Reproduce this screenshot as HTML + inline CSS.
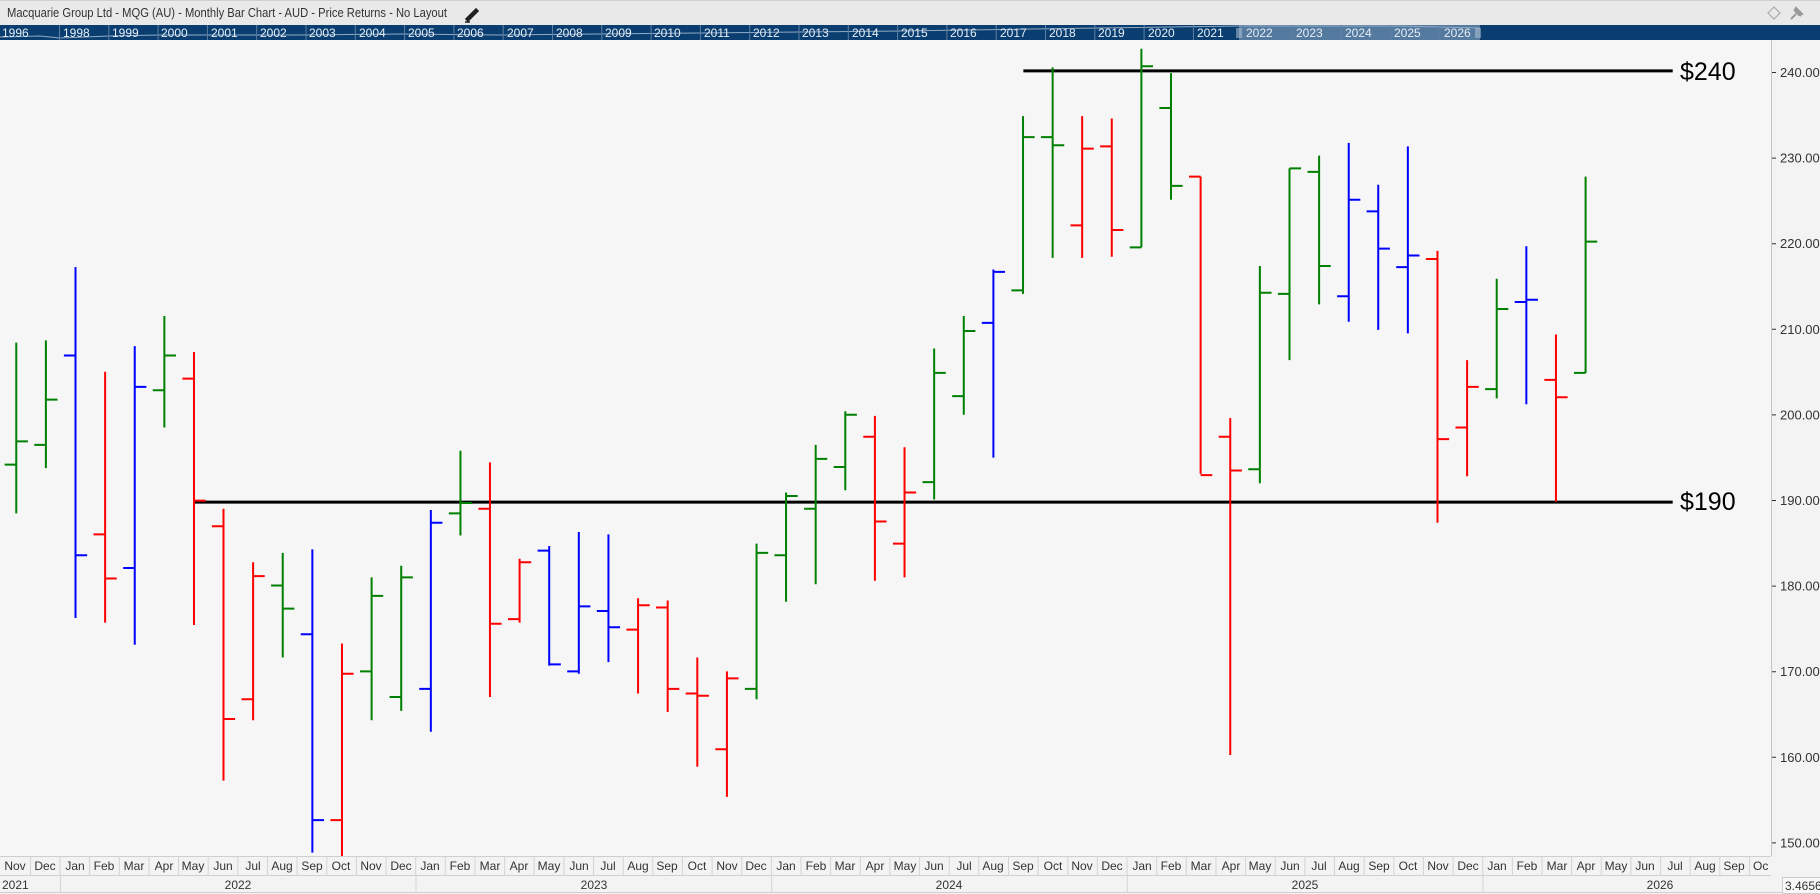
<!DOCTYPE html>
<html><head><meta charset="utf-8"><style>
html,body{margin:0;padding:0;width:1820px;height:894px;overflow:hidden;background:#f6f6f6;font-family:"Liberation Sans",sans-serif}
svg{display:block}
</style></head><body>
<svg width="1820" height="894" xmlns="http://www.w3.org/2000/svg" font-family="Liberation Sans, sans-serif">
<rect x="0" y="0" width="1820" height="894" fill="#f6f6f6"/>
<rect x="0" y="0" width="1820" height="25" fill="#e9e9e9"/>
<line x1="0" y1="0.5" x2="1820" y2="0.5" stroke="#cfcfcf"/>
<text x="7" y="17" font-size="13" fill="#333" textLength="440" lengthAdjust="spacingAndGlyphs">Macquarie Group Ltd - MQG (AU) - Monthly Bar Chart - AUD - Price Returns - No Layout</text>
<path d="M466 19 L476 9 L478 11 L468 21 Z M465 22 L470 22" stroke="#222" stroke-width="1.6" fill="#222"/>
<path d="M1774 7 L1780 13 L1774 19 L1768 13 Z" fill="none" stroke="#aaa" stroke-width="1.2"/>
<path d="M1791 19 L1796 14 M1794 9 L1801 16 M1796 8 L1802 14 L1799 15 L1795 11 Z" stroke="#999" stroke-width="2" fill="#999"/>
<rect x="0" y="25" width="1820" height="15" fill="#0b3e70"/>
<rect x="1239" y="25" width="241" height="15" fill="#557a9f"/>
<path d="M0 37 L40 36 L60 38 L110 36 L160 35 L300 35 L400 34 L500 35 L700 33 L900 31 L1100 28 L1239 26 L1400 26 L1480 28" stroke="#8fa9c4" stroke-width="1" fill="none"/>
<g fill="#e6eef6" font-size="12">
<text x="2" y="37">1996</text>
<text x="63" y="37">1998</text><text x="112" y="37">1999</text><text x="161" y="37">2000</text><text x="211" y="37">2001</text><text x="260" y="37">2002</text><text x="309" y="37">2003</text><text x="359" y="37">2004</text><text x="408" y="37">2005</text><text x="457" y="37">2006</text><text x="507" y="37">2007</text><text x="556" y="37">2008</text><text x="605" y="37">2009</text><text x="654" y="37">2010</text><text x="704" y="37">2011</text><text x="753" y="37">2012</text><text x="802" y="37">2013</text><text x="852" y="37">2014</text><text x="901" y="37">2015</text><text x="950" y="37">2016</text><text x="1000" y="37">2017</text><text x="1049" y="37">2018</text><text x="1098" y="37">2019</text><text x="1148" y="37">2020</text><text x="1197" y="37">2021</text><text x="1246" y="37">2022</text><text x="1296" y="37">2023</text><text x="1345" y="37">2024</text><text x="1394" y="37">2025</text><text x="1444" y="37">2026</text>
</g>
<g stroke="#5d7fa3" stroke-width="1">
<path d="M59.5 25V40M108.8 25V40M158.1 25V40M207.4 25V40M256.7 25V40M306 25V40M355.3 25V40M404.6 25V40M453.9 25V40M503.2 25V40M552.5 25V40M601.8 25V40M651.1 25V40M700.4 25V40M749.7 25V40M799 25V40M848.3 25V40M897.6 25V40M946.9 25V40M996.2 25V40M1045.5 25V40M1094.8 25V40M1144.1 25V40M1193.4 25V40M1242.7 25V40M1292 25V40M1341.3 25V40M1390.6 25V40M1439.9 25V40"/>
</g>
<path d="M1237 28V38M1239 28V38M1241 28V38M1476 28V38M1478 28V38M1480 28V38" stroke="#b8c8d8"/>
<rect x="1771" y="40" width="49" height="854" fill="#f3f3f3"/>
<line x1="1771.5" y1="40" x2="1771.5" y2="856" stroke="#c4c4c4"/>
<g font-size="13" fill="#333">
<text x="1780" y="77">240.00</text><text x="1780" y="162.6">230.00</text><text x="1780" y="248.2">220.00</text><text x="1780" y="333.8">210.00</text><text x="1780" y="419.4">200.00</text><text x="1780" y="505">190.00</text><text x="1780" y="590.6">180.00</text><text x="1780" y="676.2">170.00</text><text x="1780" y="761.8">160.00</text><text x="1780" y="847.4">150.00</text>
</g>
<path d="M1772 72.5h4M1772 158.1h4M1772 243.7h4M1772 329.3h4M1772 414.9h4M1772 500.5h4M1772 586.1h4M1772 671.7h4M1772 757.3h4M1772 842.9h4" stroke="#333"/>
<g transform="scale(1.1616)" fill="none" stroke-width="2">
<g stroke="#000" stroke-width="3">
<path d="M881 61H1440" vector-effect="non-scaling-stroke"/>
<path d="M167 432.3H1440" vector-effect="non-scaling-stroke"/>
</g>
<g stroke="#008000">
<path vector-effect="non-scaling-stroke" d="
M14 295V442M4 400H14M14 380H24
M39.5 293V403M29.5 383H39.5M39.5 344H49.5
M141.5 272V368M131.5 336H141.5M141.5 306H151.5
M243.4 476V566M233.4 504H243.4M243.4 524H253.4
M319.9 497V620M309.9 578H319.9M319.9 513H329.9
M345.4 487V612M335.4 600H345.4M345.4 497H355.4
M396.4 388V461M386.4 442H396.4M396.4 433H406.4
M651.3 468V602M641.3 593H651.3M651.3 476H661.3
M676.7 424V518M666.7 478H676.7M676.7 427H686.7
M702.2 383V503M692.2 438H702.2M702.2 395H712.2
M727.7 354V422M717.7 402H727.7M727.7 357H737.7
M804.2 300V430M794.2 415H804.2M804.2 321H814.2
M829.7 272V357M819.7 341H829.7M829.7 285H839.7
M880.7 100V253M870.7 250H880.7M880.7 118H890.7
M906.2 58V222M896.2 118H906.2M906.2 125H916.2
M982.6 42V213M972.6 213H982.6M982.6 57H992.6
M1008.1 63V172M998.1 93H1008.1M1008.1 160H1018.1
M1084.6 229V416M1074.6 404H1084.6M1084.6 252H1094.6
M1110.1 145V310M1100.1 253H1110.1M1110.1 145H1120.1
M1135.6 134V262M1125.6 148H1135.6M1135.6 229H1145.6
M1288.5 240V343M1278.5 335H1288.5M1288.5 266H1298.5
M1365 152V321M1355 321H1365M1365 208H1375"/>
</g>
<g stroke="#ff0000">
<path vector-effect="non-scaling-stroke" d="
M90.5 320V536M80.5 460H90.5M90.5 498H100.5
M167 303V538M157 326H167M167 431H177
M192.4 438V672M182.4 453H192.4M192.4 619H202.4
M217.9 484V620M207.9 602H217.9M217.9 496H227.9
M294.4 554V756M284.4 706H294.4M294.4 580H304.4
M421.8 398V600M411.8 438H421.8M421.8 537H431.8
M447.3 481V536M437.3 533H447.3M447.3 484H457.3
M549.3 515V597M539.3 542H549.3M549.3 521H559.3
M574.8 517V613M564.8 523H574.8M574.8 593H584.8
M600.3 566V660M590.3 597H600.3M600.3 599H610.3
M625.8 578V686M615.8 645H625.8M625.8 584H635.8
M753.2 358V500M743.2 376H753.2M753.2 449H763.2
M778.7 385V497M768.7 468H778.7M778.7 424H788.7
M931.6 100V222M921.6 194H931.6M931.6 128H941.6
M957.1 102V221M947.1 126H957.1M957.1 198H967.1
M1033.6 152V408M1023.6 152H1033.6M1033.6 409H1043.6
M1059.1 360V650M1049.1 376H1059.1M1059.1 405H1069.1
M1237.5 216V450M1227.5 223H1237.5M1237.5 378H1247.5
M1263 310V410M1253 368H1263M1263 333H1273
M1339.5 288V432M1329.5 327H1339.5M1339.5 342H1349.5"/>
</g>
<g stroke="#0000ff">
<path vector-effect="non-scaling-stroke" d="
M65 230V532M55 306H65M65 478H75
M116 298V555M106 489H116M116 333H126
M268.9 473V734M258.9 546H268.9M268.9 706H278.9
M370.9 439V630M360.9 593H370.9M370.9 450H380.9
M472.8 470V573M462.8 474H472.8M472.8 572H482.8
M498.3 458V580M488.3 578H498.3M498.3 522H508.3
M523.8 460V570M513.8 526H523.8M523.8 540H533.8
M855.2 232V394M845.2 278H855.2M855.2 234H865.2
M1161.1 123V277M1151.1 255H1161.1M1161.1 172H1171.1
M1186.5 159V284M1176.5 182H1186.5M1186.5 214H1196.5
M1212 126V287M1202 230H1212M1212 220H1222
M1314 212V348M1304 260H1314M1314 258H1324"/>
</g>
</g>
<text x="1680" y="80" font-size="25" fill="#000">$240</text>
<text x="1680" y="510" font-size="25" fill="#000">$190</text>
<rect x="0" y="856" width="1771" height="38" fill="#f3f3f3"/>
<path d="M0 856.5H1771M0 875.5H1771M0 892.5H1820" stroke="#cfcfcf"/>
<path d="M30.5 856V875M60 856V875M89.6 856V875M119.3 856V875M148.9 856V875M178.6 856V875M208.2 856V875M237.8 856V875M267.5 856V875M297.1 856V875M326.8 856V875M356.4 856V875M386 856V875M415.7 856V875M445.3 856V875M475 856V875M504.6 856V875M534.2 856V875M563.9 856V875M593.5 856V875M623.2 856V875M652.8 856V875M682.4 856V875M712.1 856V875M741.7 856V875M771.4 856V875M801 856V875M830.6 856V875M860.3 856V875M889.9 856V875M919.6 856V875M949.2 856V875M978.8 856V875M1008.5 856V875M1038.1 856V875M1067.8 856V875M1097.4 856V875M1127 856V875M1156.7 856V875M1186.3 856V875M1216 856V875M1245.6 856V875M1275.2 856V875M1304.9 856V875M1334.5 856V875M1364.2 856V875M1393.8 856V875M1423.4 856V875M1453.1 856V875M1482.7 856V875M1512.4 856V875M1542 856V875M1571.6 856V875M1601.3 856V875M1630.9 856V875M1660.6 856V875M1690.2 856V875M1719.8 856V875M1749.5 856V875" stroke="#d4d4d4"/>
<path d="M60.5 875V893M416 875V893M771.7 875V893M1127.3 875V893M1483 875V893" stroke="#d4d4d4"/>
<g font-size="12" fill="#333" text-anchor="middle">
<text x="15" y="870">Nov</text><text x="45" y="870">Dec</text><text x="75" y="870">Jan</text><text x="104" y="870">Feb</text><text x="134" y="870">Mar</text><text x="164" y="870">Apr</text><text x="193" y="870">May</text><text x="223" y="870">Jun</text><text x="253" y="870">Jul</text><text x="282" y="870">Aug</text><text x="312" y="870">Sep</text><text x="341" y="870">Oct</text><text x="371" y="870">Nov</text><text x="401" y="870">Dec</text><text x="430" y="870">Jan</text><text x="460" y="870">Feb</text><text x="490" y="870">Mar</text><text x="519" y="870">Apr</text><text x="549" y="870">May</text><text x="579" y="870">Jun</text><text x="608" y="870">Jul</text><text x="638" y="870">Aug</text><text x="667" y="870">Sep</text><text x="697" y="870">Oct</text><text x="727" y="870">Nov</text><text x="756" y="870">Dec</text><text x="786" y="870">Jan</text><text x="816" y="870">Feb</text><text x="845" y="870">Mar</text><text x="875" y="870">Apr</text><text x="905" y="870">May</text><text x="934" y="870">Jun</text><text x="964" y="870">Jul</text><text x="993" y="870">Aug</text><text x="1023" y="870">Sep</text><text x="1053" y="870">Oct</text><text x="1082" y="870">Nov</text><text x="1112" y="870">Dec</text><text x="1142" y="870">Jan</text><text x="1171" y="870">Feb</text><text x="1201" y="870">Mar</text><text x="1231" y="870">Apr</text><text x="1260" y="870">May</text><text x="1290" y="870">Jun</text><text x="1319" y="870">Jul</text><text x="1349" y="870">Aug</text><text x="1379" y="870">Sep</text><text x="1408" y="870">Oct</text><text x="1438" y="870">Nov</text><text x="1468" y="870">Dec</text><text x="1497" y="870">Jan</text><text x="1527" y="870">Feb</text><text x="1557" y="870">Mar</text><text x="1586" y="870">Apr</text><text x="1616" y="870">May</text><text x="1645" y="870">Jun</text><text x="1675" y="870">Jul</text><text x="1705" y="870">Aug</text><text x="1734" y="870">Sep</text>
<text x="238" y="889">2022</text><text x="594" y="889">2023</text><text x="949" y="889">2024</text><text x="1305" y="889">2025</text><text x="1660" y="889">2026</text>
</g>
<text x="1753" y="870" font-size="12" fill="#333">Oc</text>
<text x="2" y="889" font-size="12" fill="#333">2021</text>
<rect x="1782.5" y="877.5" width="40" height="16" fill="#f8f8f8" stroke="#ccc"/>
<text x="1785" y="890" font-size="12" fill="#333">3.46561</text>
</svg>
</body></html>
